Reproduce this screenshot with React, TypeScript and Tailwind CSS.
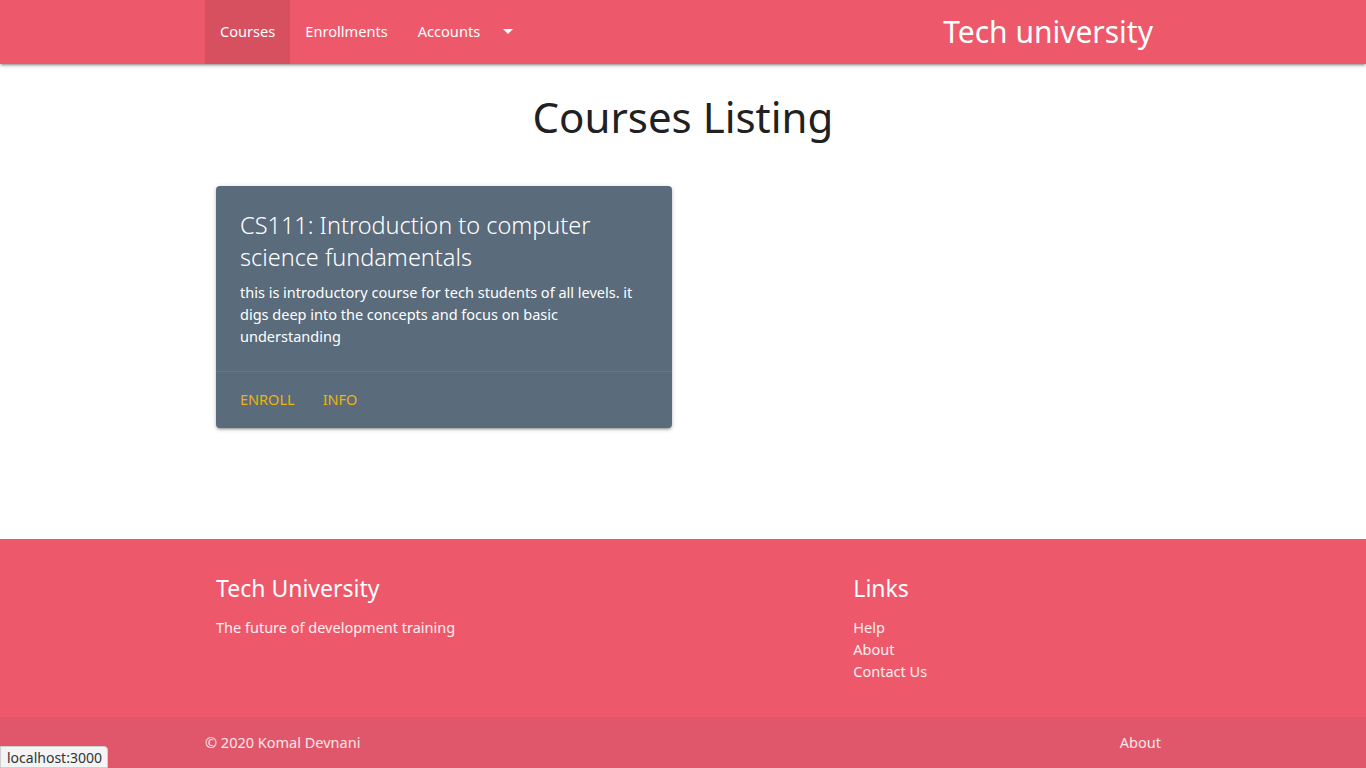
const font = { fontFamily: '"Noto Sans", "Open Sans", sans-serif' };

const NavBar = () => {
  return (
    <nav className="h-16 bg-[#ed586a] text-white shadow-[0_2px_2px_0_rgba(0,0,0,0.14),0_3px_1px_-2px_rgba(0,0,0,0.12),0_1px_5px_0_rgba(0,0,0,0.2)] relative z-10">
      <div className="w-[956px] mx-auto h-full flex items-center justify-between">
        <ul className="flex h-full text-[14.6px] leading-none">
          <li className="h-full flex items-center px-[15px] pb-[1px] bg-[#d6505f]">Courses</li>
          <li className="h-full flex items-center px-[15px] pb-[1px]">Enrollments</li>
          <li className="h-full flex items-center px-[15px] pb-[1px]">
            Accounts
            <span className="ml-[23px] w-0 h-0 border-l-[5px] border-r-[5px] border-t-[5px] border-l-transparent border-r-transparent border-t-white" />
          </li>
        </ul>
        <div className="pr-2 text-[30px] leading-none">Tech university</div>
      </div>
    </nav>
  );
};

const CourseCard = () => {
  return (
    <div className="w-[456px] bg-[#5a6b7b] rounded-sm text-white shadow-[0_2px_2px_0_rgba(0,0,0,0.14),0_3px_1px_-2px_rgba(0,0,0,0.12),0_1px_5px_0_rgba(0,0,0,0.2)]">
      <div className="px-6 pt-[23px] pb-6">
        <h2 className="text-[23.5px] leading-8 font-light mb-2">
          CS111: Introduction to computer science fundamentals
        </h2>
        <p className="text-[14.5px] leading-[22px]">
          this is introductory course for tech students of all levels. it digs deep into the concepts and focus on basic understanding
        </p>
      </div>
      <div className="border-t border-[rgba(160,160,160,0.2)] px-6 pt-4 pb-[18px] flex gap-7 text-[14.5px] leading-[22px] text-[#ecb40c] uppercase">
        <span>Enroll</span>
        <span>Info</span>
      </div>
    </div>
  );
};

export default function App() {
  return (
    <div style={font} className="min-h-screen flex flex-col bg-white relative">
      <NavBar />

      {/* Listado */}
      <main className="flex-1">
        <div className="w-[956px] mx-auto">
          <h1 className="text-center text-[42px] leading-none text-[#212121] pt-[32px]">Courses Listing</h1>
          <div className="px-[11px] pt-[48px]">
            <CourseCard />
          </div>
        </div>
      </main>

      <footer className="bg-[#ed586a] text-white">
        <div className="w-[956px] mx-auto grid grid-cols-12 pt-[35px] pb-[35px]">
          <div className="col-span-8 px-[11px]">
            <h5 className="text-[23px] leading-7">Tech University</h5>
            <p className="mt-[14px] text-[14.5px] leading-[22px] text-white/90">The future of development training</p>
          </div>
          <div className="col-span-4 px-[11px]">
            <h5 className="text-[23px] leading-7">Links</h5>
            <ul className="mt-[14px] text-[14.5px] leading-[22px] text-white/90">
              <li>Help</li>
              <li>About</li>
              <li>Contact Us</li>
            </ul>
          </div>
        </div>
        <div className="bg-[#e0566a] h-[51px] text-white/85 text-[14.5px]">
          <div className="w-[956px] mx-auto h-full flex items-center justify-between">
            <span>© 2020 Komal Devnani</span>
            <span>About</span>
          </div>
        </div>
      </footer>

      <div className="absolute left-0 bottom-0 pl-[6px] pr-[5px] h-[22px] flex items-center bg-[#f4f4f4] border border-[#d0d0d0] rounded-tr text-[14px] text-[#333]">
        localhost:3000
      </div>
    </div>
  );
}
